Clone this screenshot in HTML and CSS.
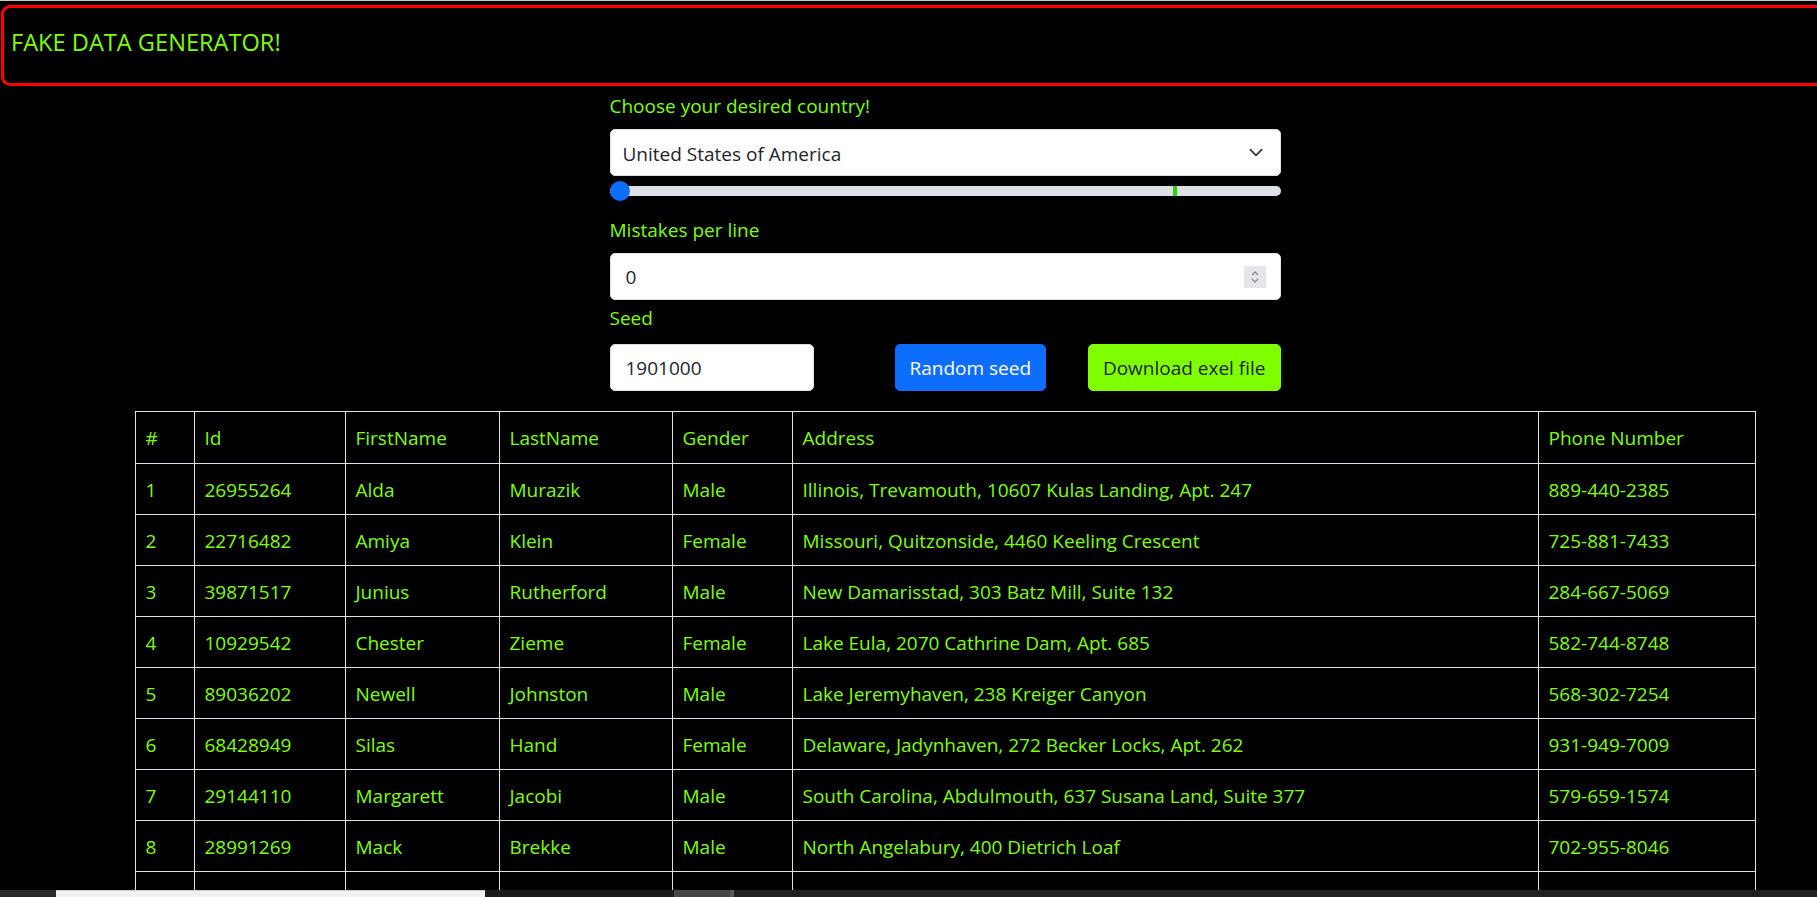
FILE: index.html
```html
<!DOCTYPE html>
<html lang="en">
<head>
<meta charset="utf-8">
<title>Fake Data Generator</title>
<link rel="stylesheet" href="styles.css">
</head>
<body>
<div class="page">
  <header class="app-header">
    <h1 class="app-title">FAKE DATA GENERATOR!</h1>
  </header>

  <main class="controls">
    <label class="field-label" for="country">Choose your desired country!</label>
    <div class="select-wrap">
      <select id="country" class="select-box">
        <option>United States of America</option>
      </select>
      <svg class="select-chevron" width="20" height="15" viewBox="0 0 16 16" aria-hidden="true">
        <path d="M2 5l6 6 6-6" fill="none" stroke="#343a40" stroke-width="2" stroke-linecap="round" stroke-linejoin="round"/>
      </svg>
    </div>
    <div class="range-wrap">
      <input class="range" type="range" min="0" max="10" value="0" aria-label="Mistakes slider">
      <span class="range-tick"></span>
    </div>

    <label class="field-label" for="mistakes">Mistakes per line</label>
    <div class="number-wrap">
      <input id="mistakes" class="text-input" type="number" value="0">
      <span class="spinner" aria-hidden="true">
        <svg width="10" height="18" viewBox="0 0 10 18">
          <path d="M2 7l3-3 3 3" fill="none" stroke="#8a8a8e" stroke-width="1.4"/>
          <path d="M2 11l3 3 3-3" fill="none" stroke="#8a8a8e" stroke-width="1.4"/>
        </svg>
      </span>
    </div>

    <label class="field-label seed-label" for="seed">Seed</label>
    <div class="seed-row">
      <input id="seed" class="text-input seed-input" type="text" value="1901000">
      <button class="btn btn-blue" type="button">Random seed</button>
      <button class="btn btn-green" type="button">Download exel file</button>
    </div>
  </main>

  <table class="data-table">
    <thead>
      <tr>
        <th class="c-num">#</th>
        <th class="c-id">Id</th>
        <th class="c-first">FirstName</th>
        <th class="c-last">LastName</th>
        <th class="c-gender">Gender</th>
        <th class="c-addr">Address</th>
        <th class="c-phone">Phone Number</th>
      </tr>
    </thead>
    <tbody>
      <tr><td>1</td><td>26955264</td><td>Alda</td><td>Murazik</td><td>Male</td><td>Illinois, Trevamouth, 10607 Kulas Landing, Apt. 247</td><td>889-440-2385</td></tr>
      <tr><td>2</td><td>22716482</td><td>Amiya</td><td>Klein</td><td>Female</td><td>Missouri, Quitzonside, 4460 Keeling Crescent</td><td>725-881-7433</td></tr>
      <tr><td>3</td><td>39871517</td><td>Junius</td><td>Rutherford</td><td>Male</td><td>New Damarisstad, 303 Batz Mill, Suite 132</td><td>284-667-5069</td></tr>
      <tr><td>4</td><td>10929542</td><td>Chester</td><td>Zieme</td><td>Female</td><td>Lake Eula, 2070 Cathrine Dam, Apt. 685</td><td>582-744-8748</td></tr>
      <tr><td>5</td><td>89036202</td><td>Newell</td><td>Johnston</td><td>Male</td><td>Lake Jeremyhaven, 238 Kreiger Canyon</td><td>568-302-7254</td></tr>
      <tr><td>6</td><td>68428949</td><td>Silas</td><td>Hand</td><td>Female</td><td>Delaware, Jadynhaven, 272 Becker Locks, Apt. 262</td><td>931-949-7009</td></tr>
      <tr><td>7</td><td>29144110</td><td>Margarett</td><td>Jacobi</td><td>Male</td><td>South Carolina, Abdulmouth, 637 Susana Land, Suite 377</td><td>579-659-1574</td></tr>
      <tr><td>8</td><td>28991269</td><td>Mack</td><td>Brekke</td><td>Male</td><td>North Angelabury, 400 Dietrich Loaf</td><td>702-955-8046</td></tr>
      <tr class="row-blank"><td></td><td></td><td></td><td></td><td></td><td></td><td></td></tr>
    </tbody>
  </table>
</div>

<div class="bottom-strip" aria-hidden="true">
  <span class="strip-a"></span>
  <span class="strip-b"></span>
  <span class="strip-c"></span>
  <span class="strip-d"></span>
  <span class="strip-e"></span>
  <span class="strip-f"></span>
</div>
</body>
</html>
```

FILE: styles.css
```css
html, body {
  margin: 0;
  padding: 0;
  background: #000;
  height: 100%;
  overflow: hidden;
}

body {
  font-family: "Open Sans", "Noto Sans", "Liberation Sans", sans-serif;
  font-size: 19px;
  line-height: 30px;
  color: #7fff00;
}

.page {
  width: 1890px;
  border-top: 1px solid #c9c9c9;
}

/* Header */
.app-header {
  margin: 4px 1px 0 1px;
  height: 81px;
  box-sizing: border-box;
  border: 3px solid #ff0000;
  border-radius: 9px;
  display: flex;
  align-items: center;
  padding: 0 7px 7px 7px;
}

.app-title {
  margin: 0;
  font-size: 23.6px;
  font-weight: 400;
  line-height: 32px;
  color: #7fff00;
}

/* Form controls */
.controls {
  width: 671px;
  margin: 5px auto 0 auto;
  display: flex;
  flex-direction: column;
}

.field-label {
  display: block;
  margin-bottom: 8px;
  color: #7fff00;
}

.select-wrap {
  position: relative;
}

.select-box {
  -webkit-appearance: none;
  appearance: none;
  display: block;
  width: 100%;
  height: 47px;
  box-sizing: border-box;
  padding: 8px 45px 6px 12px;
  font-family: inherit;
  font-size: 19px;
  line-height: 30px;
  color: #212529;
  background: #fff;
  border: 1px solid #dee2e6;
  border-radius: 5px;
  margin: 0;
}

.select-chevron {
  position: absolute;
  right: 15px;
  top: 16px;
  pointer-events: none;
}

.range-wrap {
  position: relative;
  height: 30px;
  margin-bottom: 9px;
}

.range {
  -webkit-appearance: none;
  appearance: none;
  display: block;
  width: 100%;
  height: 30px;
  margin: 0;
  padding: 0;
  background: transparent;
}

.range::-webkit-slider-runnable-track {
  height: 10px;
  background: #dee2e6;
  border-radius: 10px;
  border: 0;
}

.range::-webkit-slider-thumb {
  -webkit-appearance: none;
  appearance: none;
  width: 20px;
  height: 20px;
  margin-top: -5px;
  border-radius: 50%;
  background: #0d6efd;
  border: 0;
}

.range-tick {
  position: absolute;
  left: 563px;
  top: 10px;
  width: 4px;
  height: 10px;
  background: #2fd400;
}

.number-wrap {
  position: relative;
}

.text-input {
  display: block;
  width: 100%;
  height: 47px;
  box-sizing: border-box;
  padding: 7px 15px;
  font-family: inherit;
  font-size: 19px;
  line-height: 30px;
  color: #212529;
  background: #fff;
  border: 1px solid #dee2e6;
  border-radius: 5px;
  margin: 0;
  outline: none;
}

.text-input::-webkit-inner-spin-button,
.text-input::-webkit-outer-spin-button {
  -webkit-appearance: none;
  margin: 0;
}

.spinner {
  position: absolute;
  right: 15px;
  top: 13px;
  width: 22px;
  height: 22px;
  background: #e6e6ea;
  display: flex;
  align-items: center;
  justify-content: center;
}

.seed-label {
  margin-top: 3px;
  margin-bottom: 11px;
}

.seed-row {
  display: flex;
  align-items: center;
}

.seed-input {
  width: 204px;
  flex: none;
}

.btn {
  height: 47px;
  box-sizing: border-box;
  padding: 7px 14px;
  font-family: inherit;
  font-size: 19px;
  line-height: 30px;
  border-radius: 5px;
  border: 1px solid transparent;
  cursor: pointer;
}

.btn-blue {
  margin-left: 81px;
  background: #0d6efd;
  border-color: #0d6efd;
  color: #fff;
}

.btn-green {
  margin-left: auto;
  background: #7fff00;
  border-color: #7fff00;
  color: #212529;
}

/* Table */
.data-table {
  width: 1620px;
  margin: 20px auto 0 auto;
  border-collapse: collapse;
  table-layout: fixed;
  color: #7fff00;
}

.data-table th,
.data-table td {
  box-sizing: border-box;
  border: 1px solid #dee2e6;
  padding: 11px 10px 9px 10px;
  height: 51px;
  text-align: left;
  font-weight: 400;
  white-space: nowrap;
  overflow: hidden;
}

.data-table th {
  padding-bottom: 10px;
  height: 52px;
}

.c-num { width: 59px; }
.c-id { width: 151px; }
.c-first { width: 154px; }
.c-last { width: 173px; }
.c-gender { width: 120px; }
.c-addr { width: 746px; }
.c-phone { width: 217px; }

/* Bottom strip (window/taskbar edge) */
.bottom-strip {
  position: fixed;
  left: 0;
  right: 0;
  bottom: 0;
  height: 7px;
  display: flex;
  background: #1f1f1f;
}

.bottom-strip span {
  display: block;
  height: 100%;
}

.strip-a { width: 56px; background: #2a2a2a; }
.strip-b { width: 429px; background: #f1f1f1; box-shadow: inset 0 1px 0 #d0d0d0; }
.strip-c { width: 189px; background: #1b1b1b; }
.strip-d { width: 56px; background: #454545; }
.strip-e { width: 4px; background: #5a5a5a; }
.strip-f { flex: 1; background: #202020; }
```
